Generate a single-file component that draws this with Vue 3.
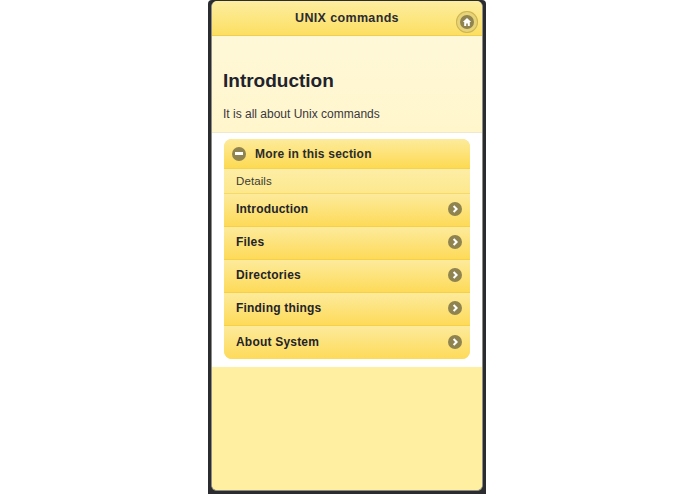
<script setup>
const items = ['Introduction', 'Files', 'Directories', 'Finding things', 'About System']
</script>

<template>
  <div class="page">
    <div class="phone">
      <div class="screen">
        <header class="bar">
          <h1>UNIX commands</h1>
          <span class="home-ring">
            <span class="icon home">
              <svg width="10" height="10" viewBox="0 0 10 10"><path d="M5 1 .8 5h1.4v4h2V6.4h1.6V9h2V5h1.4z" fill="#fff"/></svg>
            </span>
          </span>
        </header>
        <section class="intro">
          <h2>Introduction</h2>
          <p>It is all about Unix commands</p>
        </section>
        <section class="content">
          <div class="panel">
            <div class="head">
              <span class="icon minus"><i></i></span>
              <span>More in this section</span>
            </div>
            <div class="divider">Details</div>
            <a v-for="item in items" :key="item" class="row">
              <span>{{ item }}</span>
              <span class="icon arrow">
                <svg width="8" height="8" viewBox="0 0 8 8"><path d="M2.6 1 5.6 4 2.6 7" fill="none" stroke="#fff" stroke-width="2"/></svg>
              </span>
            </a>
          </div>
        </section>
        <div class="rest"></div>
      </div>
    </div>
  </div>
</template>

<style>
html, body { margin: 0; background: #fff; }
</style>

<style scoped>
.page {
  height: 494px;
  overflow: hidden;
  padding-left: 208px;
  font-family: "Liberation Sans", Arial, sans-serif;
  color: #222;
}
.phone {
  box-sizing: border-box;
  width: 278px;
  height: 494px;
  background: #2a2c30;
  padding: 1px 3px 3px;
  border-radius: 4px 4px 0 0;
}
.screen {
  box-sizing: border-box;
  height: 490px;
  display: flex;
  flex-direction: column;
  border: 1px solid #8d8d86;
  border-top: 0;
  border-radius: 6px;
  overflow: hidden;
  background: #fef0a0;
}
.bar {
  position: relative;
  height: 35px;
  flex: none;
  display: flex;
  justify-content: center;
  padding-top: 10px;
  box-sizing: border-box;
  background: linear-gradient(#fdeea0, #fcdf62);
  border-bottom: 1px solid #f0cf50;
}
h1 {
  margin: 0;
  font-size: 12.5px;
  line-height: 15px;
  font-weight: 700;
  letter-spacing: 0.35px;
  color: #2b2b33;
}
.home-ring {
  position: absolute;
  right: 4px;
  top: 10px;
  width: 22px;
  height: 22px;
  border-radius: 50%;
  background: #e8d478;
  box-shadow: inset 0 0 0 1px #cdb552;
  display: flex;
  align-items: center;
  justify-content: center;
}
.icon {
  flex: none;
  width: 14px;
  height: 14px;
  border-radius: 50%;
  background: #8f8450;
  display: flex;
  align-items: center;
  justify-content: center;
}
.intro {
  flex: none;
  height: 97px;
  box-sizing: border-box;
  padding: 33px 11px 0;
  background: linear-gradient(#fff8d8, #fff6cc);
  border-bottom: 1px solid #eee8cc;
}
h2 {
  margin: 0;
  font-size: 19px;
  line-height: 24px;
  font-weight: 700;
  color: #20222c;
}
p {
  margin: 13px 0 0;
  font-size: 12px;
  line-height: 16px;
  color: #3a3640;
}
.content {
  flex: none;
  height: 234px;
  box-sizing: border-box;
  background: #fff;
  padding: 6px 12px 0;
}
.panel {
  border-radius: 8px;
  overflow: hidden;
  height: 220px;
  background: #fde070;
}
.head {
  height: 30px;
  display: flex;
  align-items: center;
  gap: 9px;
  padding-left: 8px;
  font-size: 12px;
  font-weight: 700;
  letter-spacing: 0.2px;
  color: #2c2c2c;
  background: linear-gradient(#fdeb9c, #fdda52);
  border-bottom: 1px solid #f5d250;
  box-sizing: border-box;
}
.minus i {
  display: block;
  width: 8px;
  height: 2.4px;
  background: #fff;
}
.divider {
  height: 25px;
  box-sizing: border-box;
  padding: 5px 12px 0;
  font-size: 11.5px;
  line-height: 15px;
  letter-spacing: 0.1px;
  color: #3b3a38;
  background: linear-gradient(#fdeea6, #fde88e);
  border-bottom: 1px solid #f5da68;
}
.row {
  height: 33px;
  box-sizing: border-box;
  display: flex;
  align-items: center;
  justify-content: space-between;
  padding: 0 8px 2px 12px;
  font-size: 12px;
  font-weight: 700;
  letter-spacing: 0.2px;
  color: #23232a;
  background: linear-gradient(#fdeb9c, #fdda58);
  border-bottom: 1px solid #f5d048;
}
.row:last-child {
  border-bottom: 0;
}
.rest {
  flex: 1;
  background: #fef0a0;
}
</style>
